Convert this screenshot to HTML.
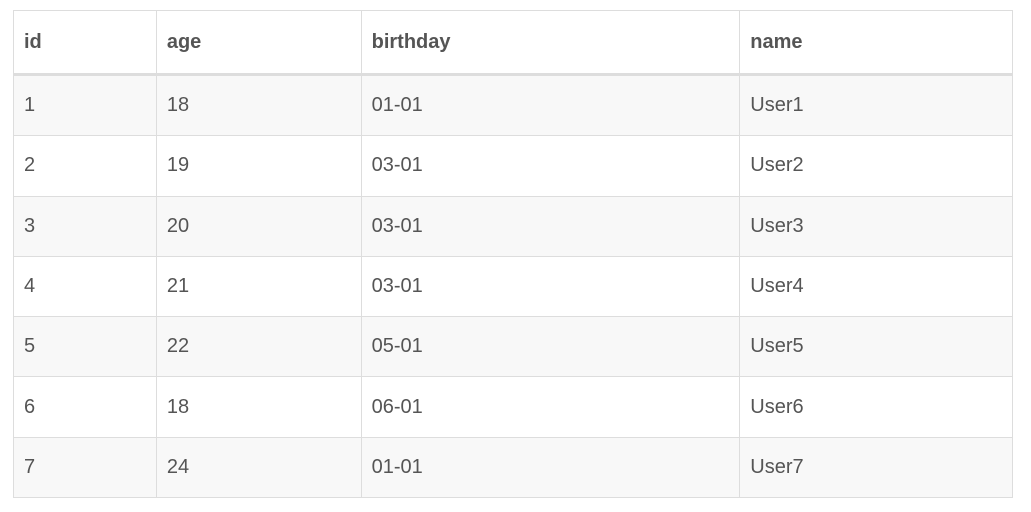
<!DOCTYPE html>
<html><head><style>
body{margin:0;background:#fff;font-family:"Liberation Sans","DejaVu Sans",sans-serif;color:#555;font-size:20px}
table{position:absolute;left:13px;top:10px;border-collapse:collapse;width:1000px}
td,th{border:1px solid #ddd;padding:0 0 0 10px;text-align:left;vertical-align:middle}
th{height:62px;font-weight:bold;border-bottom:3px solid #ddd}
td{height:59.3px}
tbody tr:nth-child(odd) td{background:#f8f8f8}
</style></head><body>
<table>
<colgroup><col style="width:143px"><col style="width:205px"><col style="width:379px"><col style="width:273px"></colgroup>
<thead><tr><th>id</th><th>age</th><th>birthday</th><th>name</th></tr></thead>
<tbody>
<tr><td>1</td><td>18</td><td>01-01</td><td>User1</td></tr>
<tr><td>2</td><td>19</td><td>03-01</td><td>User2</td></tr>
<tr><td>3</td><td>20</td><td>03-01</td><td>User3</td></tr>
<tr><td>4</td><td>21</td><td>03-01</td><td>User4</td></tr>
<tr><td>5</td><td>22</td><td>05-01</td><td>User5</td></tr>
<tr><td>6</td><td>18</td><td>06-01</td><td>User6</td></tr>
<tr><td>7</td><td>24</td><td>01-01</td><td>User7</td></tr>
</tbody></table>
</body></html>
